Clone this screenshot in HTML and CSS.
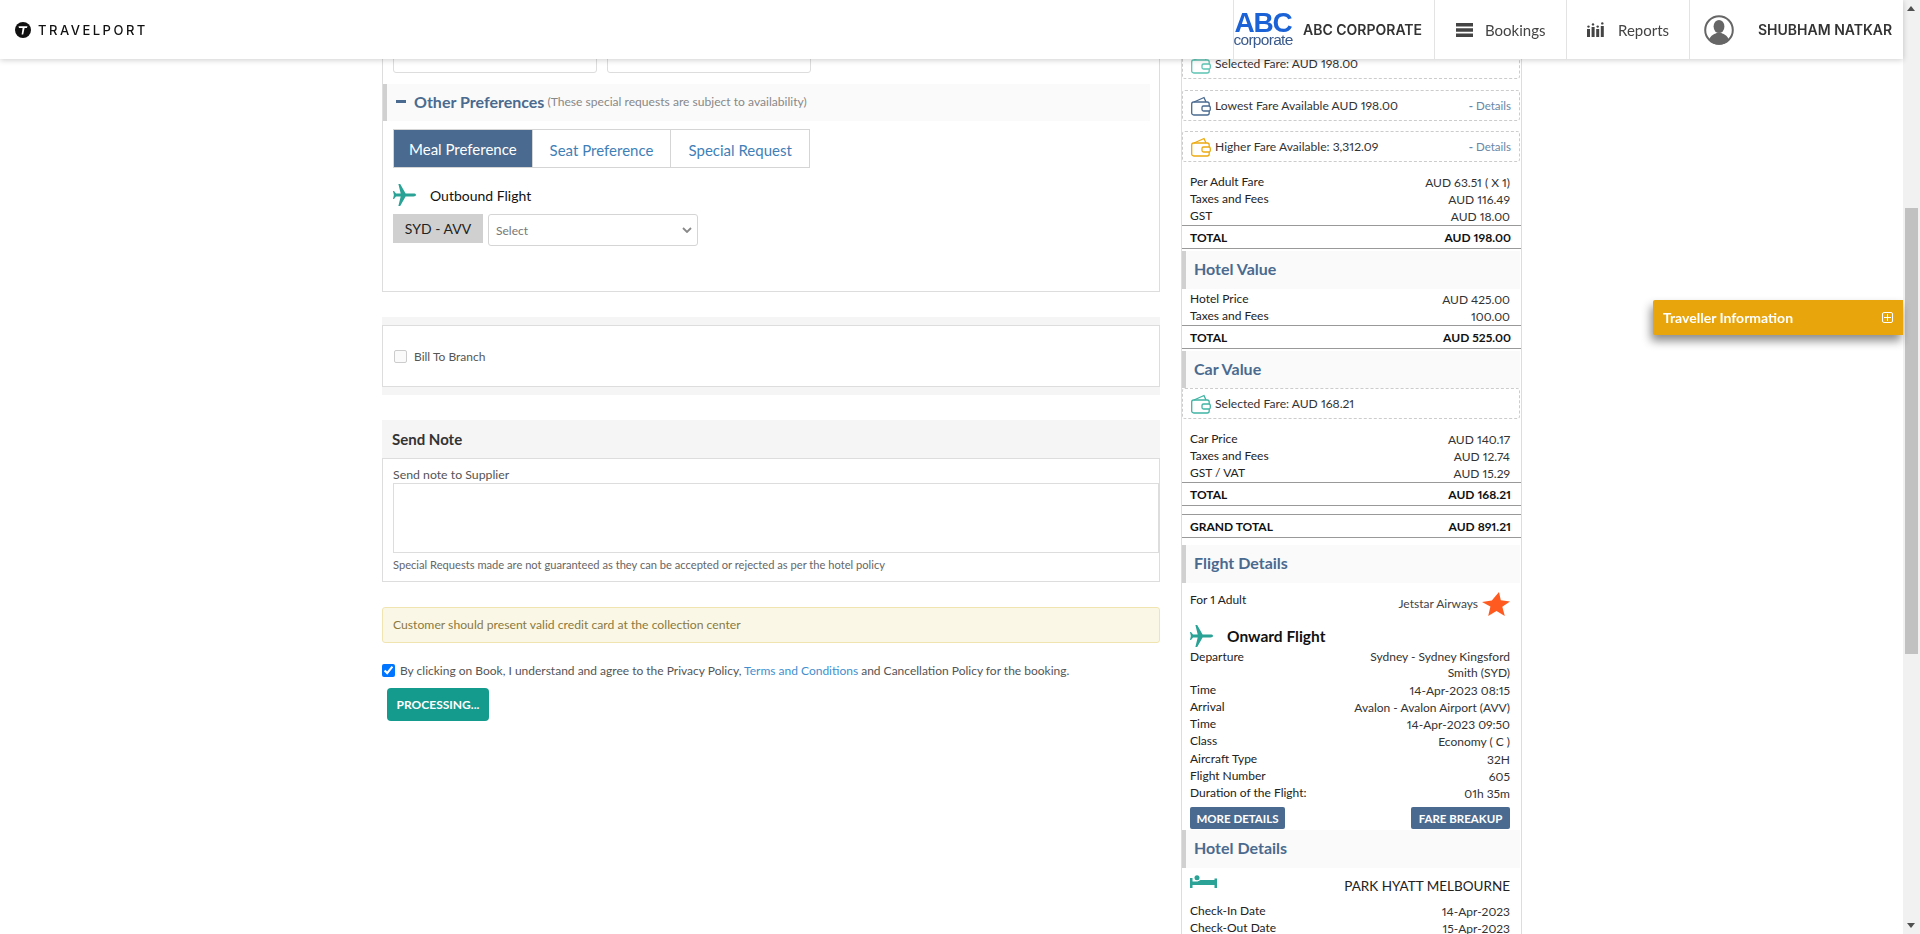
FILE: index.html
```html
<!DOCTYPE html>
<html lang="en">
<head>
    <meta charset="UTF-8">
    <meta name="viewport" content="width=device-width, initial-scale=1.0">
    <title>Booking Review</title>
    <link rel="stylesheet" href="styles.css">
</head>
<body>
    <header class="topbar">
        <div class="brand">
            <svg class="brand-mark" viewBox="0 0 16 16" width="16" height="16"><circle cx="8" cy="8" r="8" fill="#111"/><path d="M3.5 4.2h9l-.6 1.8H9.6L8.2 12.4H6.6L7.6 6H4z" fill="#fff"/></svg>
            <span class="brand-name">TRAVELPORT</span>
        </div>
        <nav class="topnav">
            <div class="topnav-item corp">
                <div class="corp-logo"><span class="corp-abc">ABC</span><span class="corp-sub">corporate</span></div>
                <span class="corp-name">ABC CORPORATE</span>
            </div>
            <a class="topnav-item link bookings" href="#">
                <svg viewBox="0 0 17 14" width="17" height="14"><path d="M0 0h17v3.4H0zM0 5.3h17v3.4H0zM0 10.6h17V14H0z" fill="#444"/></svg>
                <span>Bookings</span>
            </a>
            <a class="topnav-item link reports" href="#">
                <svg viewBox="0 0 17 15" width="17" height="15"><path d="M0 7h3v8H0zM4.6 5h3v10h-3zM9.2 7h3v8h-3zM13.8 4h3v11h-3z" fill="#444"/><circle cx="1.5" cy="4.6" r="1.2" fill="#444"/><circle cx="6" cy="2.4" r="1.2" fill="#444"/><circle cx="10.7" cy="4.6" r="1.2" fill="#444"/><circle cx="15.3" cy="1.4" r="1.2" fill="#444"/></svg>
                <span>Reports</span>
            </a>
            <div class="topnav-item user">
                <svg viewBox="0 0 30 30" width="30" height="30"><circle cx="15" cy="15" r="13.8" fill="#fff" stroke="#666" stroke-width="2"/><ellipse cx="15" cy="11.5" rx="5.4" ry="6.6" fill="#666"/><path d="M5 25c1.5-5 6-6 7.5-7h5c1.500 1 6 2 7.500 7a13 13 0 0 1-20 0z" fill="#666"/></svg>
                <span class="user-name">SHUBHAM NATKAR</span>
            </div>
        </nav>
    </header>

    <div class="page">
        <main class="columns">
            <section class="form-col">
                <div class="panel pref-panel">
                    <div class="input-row">
                        <div class="fake-input"></div>
                        <div class="fake-input"></div>
                    </div>
                    <div class="section-bar pref-bar">
                        <span class="minus"></span>
                        <span class="pref-title">Other Preferences</span>
                        <span class="pref-note">(These special requests are subject to availability)</span>
                    </div>
                    <div class="tabs">
                        <a class="tab active" href="#">Meal Preference</a>
                        <a class="tab" href="#">Seat Preference</a>
                        <a class="tab" href="#">Special Request</a>
                    </div>
                    <div class="flight-head">
                        <svg viewBox="0 0 23 22" width="23" height="22"><path d="M23 11c0-.9-1-1.400-2.500-1.400H12.600L7.200 0H5.400l2.300 9.600H3L1 7H0l.9 4L0 15h1l2-2.600h4.700L5.400 22h1.800l5.400-9.600h7.900C22 12.400 23 11.900 23 11z" fill="#2aa296"/></svg>
                        <span>Outbound Flight</span>
                    </div>
                    <div class="meal-row">
                        <span class="route-tag">SYD - AVV</span>
                        <select class="meal-select"><option>Select</option></select>
                    </div>
                </div>

                <div class="branch-wrap">
                    <div class="panel branch">
                        <input type="checkbox" class="check-off">
                        <label>Bill To Branch</label>
                    </div>
                </div>

                <div class="note-head">Send Note</div>
                <div class="panel note-body">
                    <label class="note-label">Send note to Supplier</label>
                    <textarea class="note-text"></textarea>
                    <p class="note-hint">Special Requests made are not guaranteed as they can be accepted or rejected as per the hotel policy</p>
                </div>

                <div class="alert">Customer should present valid credit card at the collection center</div>

                <div class="agree">
                    <input type="checkbox" checked>
                    <span>By clicking on Book, I understand and agree to the Privacy Policy, <a href="#">Terms and Conditions</a> and Cancellation Policy for the booking.</span>
                </div>
                <button class="book-btn">PROCESSING...</button>
            </section>

            <aside class="summary">
                <div class="fare-box first">
                    <svg class="wallet" viewBox="0 0 20 20" width="20" height="20"><g fill="none" stroke="#5cc4b4" stroke-width="1.300"><path d="M3 6 13 1.500 15 6"/><rect x=".7" y="6" width="17.500" height="13" rx="2"/><rect x="11" y="10" width="8.300" height="5" rx="1.500" fill="#fff"/></g></svg>
                    <span>Selected Fare: AUD 198.00</span>
                </div>
                <div class="fare-box">
                    <svg class="wallet" viewBox="0 0 20 20" width="20" height="20"><g fill="none" stroke="#4a6a8f" stroke-width="1.300"><path d="M3 6 13 1.500 15 6"/><rect x=".7" y="6" width="17.500" height="13" rx="2"/><rect x="11" y="10" width="8.300" height="5" rx="1.500" fill="#fff"/></g></svg>
                    <span>Lowest Fare Available AUD 198.00</span>
                    <a class="details" href="#"><b>-</b> Details</a>
                </div>
                <div class="fare-box">
                    <svg class="wallet" viewBox="0 0 20 20" width="20" height="20"><g fill="none" stroke="#eba90f" stroke-width="1.300"><path d="M3 6 13 1.500 15 6"/><rect x=".7" y="6" width="17.500" height="13" rx="2"/><rect x="11" y="10" width="8.300" height="5" rx="1.500" fill="#fff"/></g></svg>
                    <span>Higher Fare Available: 3,312.09</span>
                    <a class="details" href="#"><b>-</b> Details</a>
                </div>

                <div class="rows fare-rows">
                    <div class="row"><span>Per Adult Fare</span><span>AUD 63.51 ( X 1)</span></div>
                    <div class="row"><span>Taxes and Fees</span><span>AUD 116.49</span></div>
                    <div class="row"><span>GST</span><span>AUD 18.00</span></div>
                </div>
                <div class="total"><span>TOTAL</span><span>AUD 198.00</span></div>

                <h3 class="section-bar side-bar hotel-value">Hotel Value</h3>
                <div class="rows">
                    <div class="row"><span>Hotel Price</span><span>AUD 425.00</span></div>
                    <div class="row"><span>Taxes and Fees</span><span>100.00</span></div>
                </div>
                <div class="total"><span>TOTAL</span><span>AUD 525.00</span></div>

                <h3 class="section-bar side-bar car-value">Car Value</h3>
                <div class="fare-box">
                    <svg class="wallet" viewBox="0 0 20 20" width="20" height="20"><g fill="none" stroke="#3fb3a3" stroke-width="1.300"><path d="M3 6 13 1.500 15 6"/><rect x=".7" y="6" width="17.500" height="13" rx="2"/><rect x="11" y="10" width="8.300" height="5" rx="1.500" fill="#fff"/></g></svg>
                    <span>Selected Fare: AUD 168.21</span>
                </div>
                <div class="rows fare-rows">
                    <div class="row"><span>Car Price</span><span>AUD 140.17</span></div>
                    <div class="row"><span>Taxes and Fees</span><span>AUD 12.74</span></div>
                    <div class="row"><span>GST / VAT</span><span>AUD 15.29</span></div>
                </div>
                <div class="total"><span>TOTAL</span><span>AUD 168.21</span></div>
                <div class="total grand"><span>GRAND TOTAL</span><span>AUD 891.21</span></div>

                <h3 class="section-bar side-bar flight-details">Flight Details</h3>
                <div class="adult-row">
                    <span>For 1 Adult</span>
                    <span class="airline">Jetstar Airways
                        <svg viewBox="0 0 28 25" width="28" height="25"><path d="M17 0l1.800 8.300L28 9.500l-7.700 5.300L22.800 24l-8.300-5L6.200 24l2.200-9.500L0 10l9.800-1.500z" fill="#ff5a1f"/></svg>
                    </span>
                </div>
                <div class="onward">
                    <svg viewBox="0 0 23 22" width="23" height="22"><path d="M23 11c0-.9-1-1.400-2.500-1.400H12.600L7.200 0H5.400l2.300 9.600H3L1 7H0l.9 4L0 15h1l2-2.600h4.700L5.400 22h1.800l5.400-9.600h7.900C22 12.400 23 11.900 23 11z" fill="#2aa296"/></svg>
                    <span>Onward Flight</span>
                </div>
                <div class="rows">
                    <div class="row tall"><span>Departure</span><span class="wrap">Sydney - Sydney Kingsford Smith (SYD)</span></div>
                    <div class="row"><span>Time</span><span>14-Apr-2023 08:15</span></div>
                    <div class="row"><span>Arrival</span><span>Avalon - Avalon Airport (AVV)</span></div>
                    <div class="row"><span>Time</span><span>14-Apr-2023 09:50</span></div>
                    <div class="row"><span>Class</span><span>Economy ( C )</span></div>
                    <div class="row aircraft"><span>Aircraft Type</span><span>32H</span></div>
                    <div class="row"><span>Flight Number</span><span>605</span></div>
                    <div class="row"><span>Duration of the Flight:</span><span>01h 35m</span></div>
                </div>
                <div class="btn-row">
                    <button class="blue-btn more">MORE DETAILS</button>
                    <button class="blue-btn fare">FARE BREAKUP</button>
                </div>

                <h3 class="section-bar side-bar hotel-details">Hotel Details</h3>
                <div class="hotel-head">
                    <svg viewBox="0 0 27 13" width="27" height="13"><path d="M0 3h2.500v3.500h5l3-1.500h14V3.500H27V13h-2.500v-3h-22v3H0z" fill="#2aa296"/><circle cx="7" cy="2.800" r="2.500" fill="#2aa296"/></svg>
                    <span>PARK HYATT MELBOURNE</span>
                </div>
                <div class="rows">
                    <div class="row"><span>Check-In Date</span><span>14-Apr-2023</span></div>
                    <div class="row"><span>Check-Out Date</span><span>15-Apr-2023</span></div>
                </div>
            </aside>
        </main>

        <div class="scrollbar">
            <span class="arrow up"></span>
            <div class="thumb"></div>
            <span class="arrow down"></span>
        </div>
    </div>

    <div class="traveller-tab">
        <span>Traveller Information</span>
        <span class="plus-box"></span>
    </div>
</body>
</html>
```

FILE: styles.css
```css
/* Page shell */
* {
    box-sizing: border-box;
}
html, body {
    height: 100%;
}
body {
    margin: 0;
    overflow: hidden;
    background-color: #FFFFFF;
    color: #333;
    font-family: Lato, "Open Sans", sans-serif;
    font-size: 12px;
    font-variant-numeric: proportional-nums;
}
a {
    text-decoration: none;
}
.page {
    display: flex;
    height: 934px;
    overflow: hidden;
}
.columns {
    flex: 1;
    display: flex;
    gap: 21px;
    padding-left: 382px;
    align-items: flex-start;
}

/* Top bar */
.topbar {
    position: fixed;
    top: 0;
    left: 0;
    width: 1903px;
    height: 59px;
    z-index: 10;
    display: flex;
    justify-content: space-between;
    background-color: #FFFFFF;
    box-shadow: 0 1px 6px rgba(0, 0, 0, 0.2);
}
.brand {
    display: flex;
    align-items: center;
    gap: 7px;
    padding-left: 15px;
}
.brand-name {
    font-family: Inter, sans-serif;
    font-size: 13px;
    font-weight: 500;
    letter-spacing: 2.5px;
    color: #111;
}
.topnav {
    display: flex;
}
.topnav-item {
    display: flex;
    align-items: center;
    height: 59px;
    border-left: 1px solid #E3E3E3;
}
.corp {
    width: 201px;
    padding-left: 0;
}
.corp-logo {
    display: flex;
    flex-direction: column;
    align-items: center;
    width: 58px;
    margin-right: 11px;
    font-family: "Liberation Sans", sans-serif;
}
.corp-abc {
    font-size: 28px;
    font-weight: 700;
    line-height: 20px;
    letter-spacing: -1.200px;
    color: #1A62D6;
}
.corp-sub {
    font-size: 15.500px;
    line-height: 13px;
    letter-spacing: -0.700px;
    color: #3A5A8C;
}
.corp-name, .user-name {
    font-family: Inter, sans-serif;
    font-size: 14px;
    font-weight: 600;
    color: #333;
    white-space: nowrap;
}
.link {
    color: #444;
    font-size: 15px;
}
.bookings {
    width: 132px;
    padding-left: 21px;
    gap: 12px;
}
.reports {
    width: 123px;
    padding-left: 20px;
    gap: 14px;
}
.user {
    width: 214px;
    padding-left: 14px;
    gap: 24px;
}

/* Left column */
.form-col {
    width: 778px;
    flex-shrink: 0;
}
.panel {
    border: 1px solid #DDD;
    background-color: #FFF;
}
.pref-panel {
    height: 292px;
    margin-bottom: 25px;
    border-top: none;
    padding-top: 30px;
}
.input-row {
    display: flex;
    gap: 10px;
    padding-left: 10px;
}
.fake-input {
    width: 204px;
    height: 43px;
    border: 1px solid #DDD;
    border-radius: 3px;
}
.section-bar {
    background-color: #FAFAFA;
    border-left: 4px solid #D0D0D0;
    margin: 0;
}
.pref-bar {
    display: flex;
    align-items: center;
    height: 37px;
    width: 767px;
    margin-top: 11px;
    padding: 0 0 2px 9px;
}
.minus {
    width: 10px;
    height: 3px;
    background-color: #4A6A8F;
    margin-right: 8px;
}
.pref-title {
    font-size: 16px;
    font-weight: 700;
    color: #4A6A8F;
    margin-right: 3px;
}
.pref-note {
    font-size: 12.100px;
    color: #888;
}
.tabs {
    display: flex;
    margin: 8px 0 0 10px;
    width: 417px;
    height: 39px;
    border: 1px solid #D5D5D5;
}
.tab {
    flex: 1;
    display: flex;
    align-items: center;
    justify-content: center;
    padding-top: 2px;
    font-size: 15px;
    color: #3F7FB8;
    border-left: 1px solid #D5D5D5;
}
.tab.active {
    padding-top: 0;
    background-color: #4A6A8F;
    color: #FFF;
    border-left: none;
}
.flight-head {
    display: flex;
    align-items: center;
    gap: 14px;
    margin: 16px 0 0 10px;
    font-size: 14px;
    color: #111;
}
.meal-row {
    display: flex;
    gap: 5px;
    margin: 8px 0 0 10px;
    align-items: flex-start;
}
.route-tag {
    display: flex;
    align-items: center;
    justify-content: center;
    width: 90px;
    height: 29px;
    background-color: #D0D0D0;
    font-size: 14px;
    color: #222;
}
.meal-select {
    appearance: none;
    width: 210px;
    height: 32px;
    padding-left: 7px;
    border: 1px solid #D5D5D5;
    border-radius: 3px;
    background: #FFF url("data:image/svg+xml,%3Csvg xmlns='http://www.w3.org/2000/svg' width='10' height='6'%3E%3Cpath d='M1 1l4 4 4-4' fill='none' stroke='%23888' stroke-width='1.800'/%3E%3C/svg%3E") no-repeat right 5px center;
    color: #777;
    font-family: Lato, sans-serif;
    font-size: 12px;
}
.branch-wrap {
    background-color: #F5F5F5;
    padding: 8px 0;
    margin-bottom: 25px;
}
.branch {
    display: flex;
    align-items: center;
    height: 62px;
    padding: 0 11px;
    gap: 7px;
    color: #555;
    font-size: 12px;
}
.check-off {
    appearance: none;
    width: 13px;
    height: 13px;
    margin: 0;
    border: 1px solid #CCC;
    border-radius: 2px;
    background-color: #FAFAFA;
}
.note-head {
    height: 38px;
    line-height: 38px;
    padding-left: 10px;
    background-color: #F5F5F5;
    font-size: 15px;
    font-weight: 700;
    color: #333;
}
.note-body {
    height: 124px;
    padding: 9px 0 0 10px;
}
.note-label {
    display: block;
    height: 15px;
    line-height: 14px;
    font-size: 12.300px;
    color: #555;
}
.note-text {
    display: block;
    width: 100%;
    height: 70px;
    margin: 0;
    border: 1px solid #DDD;
    resize: none;
}
.note-hint {
    margin: 5px 0 0;
    font-size: 11.150px;
    line-height: 14px;
    color: #666;
}
.alert {
    height: 36px;
    line-height: 34px;
    margin-top: 25px;
    padding-left: 10px;
    border: 1px solid #F0E5B0;
    border-radius: 3px;
    background-color: #FBF7E6;
    color: #8A7A40;
    font-size: 12.200px;
}
.agree {
    display: flex;
    align-items: center;
    gap: 5px;
    margin-top: 20px;
    color: #555;
    font-size: 12px;
}
.agree input {
    width: 13px;
    height: 13px;
    margin: 0;
}
.agree a {
    color: #3F8FD0;
}
.book-btn {
    display: block;
    width: 102px;
    height: 33px;
    margin: 10px 0 0 5px;
    border: none;
    border-radius: 4px;
    background-color: #159A8E;
    color: #FFF;
    font-family: Lato, sans-serif;
    font-size: 12px;
    font-weight: 700;
}

/* Right column */
.summary {
    width: 341px;
    flex-shrink: 0;
    padding: 0 1px 0 0;
    border-left: 1px solid #DDD;
    border-right: 1px solid #DDD;
    color: #222;
    font-size: 12px;
}
.fare-box {
    display: flex;
    align-items: center;
    height: 31px;
    margin: 0 0 10px;
    padding: 0 8px;
    border: 1px dashed #CCC;
    border-radius: 3px;
    color: #333;
    font-size: 12.100px;
}
.fare-box.first {
    margin-top: 48px;
    margin-bottom: 11px;
}
.wallet {
    margin-right: 4px;
    flex-shrink: 0;
}
.details {
    margin-left: auto;
    color: #6B86A6;
    font-size: 11.500px;
}
.rows {
    padding: 1px 10px 1px 8px;
}
.fare-rows {
    margin-top: 9px;
}
.row {
    display: flex;
    justify-content: space-between;
    height: 17px;
    line-height: 17px;
    gap: 20px;
}
.row span:last-child {
    padding-top: 1px;
    color: #333;
    white-space: nowrap;
}
.row.tall {
    height: 33px;
}
.row.aircraft {
    margin-top: 1px;
}
.row .wrap {
    width: 170px;
    line-height: 16px;
    text-align: right;
    white-space: normal !important;
}
.total {
    display: flex;
    justify-content: space-between;
    height: 24px;
    line-height: 24px;
    padding: 0 10px 0 8px;
    margin: 0 -1px 0 0;
    border-top: 1px solid #999;
    border-bottom: 1px solid #999;
    font-weight: 700;
    color: #111;
}
.side-bar {
    display: flex;
    align-items: center;
    height: 38px;
    padding: 0 0 3px 8px;
    font-size: 16px;
    font-weight: 700;
    color: #4A6A8F;
}
.hotel-value {
    margin: 2px 0 0;
}
.car-value {
    height: 37px;
    margin: 2px 0 0;
}
.grand {
    margin-top: 8px;
}
.flight-details {
    margin: 7px 0 0;
}
.adult-row {
    display: flex;
    justify-content: space-between;
    height: 42px;
    padding: 8px 10px 0 8px;
    line-height: 17px;
}
.airline {
    display: flex;
    align-items: flex-start;
    gap: 4px;
    color: #444;
    padding-top: 4px;
}
.airline svg {
    margin-top: -3px;
}
.onward {
    display: flex;
    align-items: center;
    gap: 14px;
    height: 22px;
    padding-left: 8px;
    font-size: 15.500px;
    font-weight: 700;
    color: #111;
}
.btn-row {
    display: flex;
    justify-content: space-between;
    padding: 5px 10px 0 8px;
}
.blue-btn {
    height: 22px;
    border: none;
    border-radius: 2px;
    background-color: #4A6A8F;
    color: #FFF;
    font-family: Lato, sans-serif;
    font-size: 11.500px;
    font-weight: 700;
}
.blue-btn.more {
    width: 95px;
}
.blue-btn.fare {
    width: 99px;
}
.hotel-details {
    margin: 1px 0 0;
}
.hotel-head {
    display: flex;
    justify-content: space-between;
    height: 33px;
    padding: 7px 10px 0 8px;
    font-size: 13.500px;
    color: #222;
}
.hotel-head span {
    padding-top: 3px;
}

/* Fake window scrollbar */
.scrollbar {
    position: relative;
    width: 17px;
    flex-shrink: 0;
    background-color: #F1F1F1;
}
.thumb {
    position: absolute;
    left: 2px;
    top: 208px;
    width: 13px;
    height: 446px;
    background-color: #C1C1C1;
}
.arrow {
    position: absolute;
    left: 4px;
    width: 0;
    height: 0;
    border-left: 4px solid transparent;
    border-right: 4px solid transparent;
}
.arrow.up {
    top: 6px;
    border-bottom: 5px solid #505050;
}
.arrow.down {
    bottom: 6px;
    border-top: 5px solid #505050;
}

/* Floating tab */
.traveller-tab {
    position: fixed;
    left: 1653px;
    top: 300px;
    width: 250px;
    height: 35px;
    z-index: 5;
    display: flex;
    align-items: center;
    justify-content: space-between;
    padding: 0 10px;
    border-radius: 2px 0 0 2px;
    background-color: #E8A50C;
    box-shadow: -2px 6px 10px rgba(0, 0, 0, 0.45);
    color: #FFF;
    font-size: 14px;
    font-weight: 700;
}
.plus-box {
    position: relative;
    width: 11px;
    height: 11px;
    border: 1px solid #FFF;
    border-radius: 2px;
}
.plus-box::before {
    content: "";
    position: absolute;
    left: 1px;
    top: 4px;
    width: 7px;
    height: 1px;
    background-color: #FFF;
}
.plus-box::after {
    content: "";
    position: absolute;
    left: 4px;
    top: 1px;
    width: 1px;
    height: 7px;
    background-color: #FFF;
}
```
